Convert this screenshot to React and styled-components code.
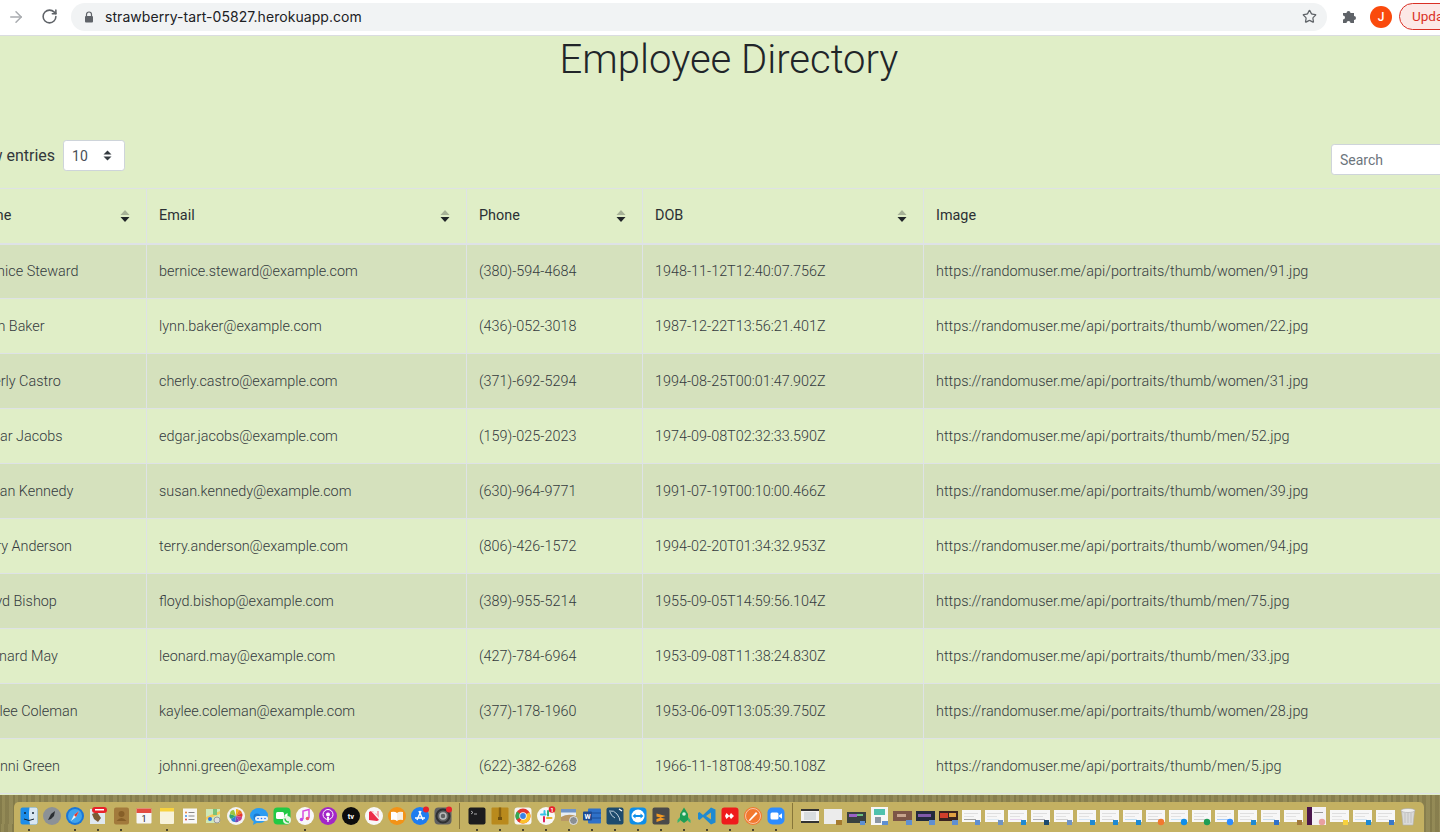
import React from "react";
import styled, { createGlobalStyle } from "styled-components";
import { ArrowRight, RotateCw, Star } from "lucide-react";

const employees = [
  ["Bernice Steward", "bernice.steward@example.com", "(380)-594-4684", "1948-11-12T12:40:07.756Z", "women/91"],
  ["Lynn Baker", "lynn.baker@example.com", "(436)-052-3018", "1987-12-22T13:56:21.401Z", "women/22"],
  ["Cherly Castro", "cherly.castro@example.com", "(371)-692-5294", "1994-08-25T00:01:47.902Z", "women/31"],
  ["Edgar Jacobs", "edgar.jacobs@example.com", "(159)-025-2023", "1974-09-08T02:32:33.590Z", "men/52"],
  ["Susan Kennedy", "susan.kennedy@example.com", "(630)-964-9771", "1991-07-19T00:10:00.466Z", "women/39"],
  ["Terry Anderson", "terry.anderson@example.com", "(806)-426-1572", "1994-02-20T01:34:32.953Z", "women/94"],
  ["Floyd Bishop", "floyd.bishop@example.com", "(389)-955-5214", "1955-09-05T14:59:56.104Z", "men/75"],
  ["Leonard May", "leonard.may@example.com", "(427)-784-6964", "1953-09-08T11:38:24.830Z", "men/33"],
  ["Kaylee Coleman", "kaylee.coleman@example.com", "(377)-178-1960", "1953-06-09T13:05:39.750Z", "women/28"],
  ["Johnni Green", "johnni.green@example.com", "(622)-382-6268", "1966-11-18T08:49:50.108Z", "men/5"],
];

const columns = [
  { label: "Name", width: 186, sortable: true },
  { label: "Email", width: 320, sortable: true },
  { label: "Phone", width: 176, sortable: true },
  { label: "DOB", width: 281, sortable: true },
  { label: "Image", width: 575, sortable: false },
];

const GlobalStyle = createGlobalStyle`
  html, body {
    margin: 0;
    height: 100%;
    overflow: hidden;
    font-family: Roboto, "Liberation Sans", sans-serif;
  }
  * { box-sizing: border-box; }
`;

const Screen = styled.div`
  position: relative;
  width: 1440px;
  height: 832px;
  overflow: hidden;
  background: #e0eec7;
  display: flex;
  flex-direction: column;
`;

/* browser toolbar */
const BrowserBar = styled.header`
  height: 36px;
  flex: none;
  background: #fff;
  border-bottom: 1px solid #dadce0;
  display: flex;
  align-items: center;
  padding: 0 0 2px 7px;
  color: #5f6368;
`;

const NavIcon = styled.span`
  width: 18px;
  height: 18px;
  display: flex;
  margin-left: ${(p) => p.$before || 0}px;
  margin-right: ${(p) => p.$gap || 0}px;
  color: ${(p) => p.$color};
`;

const Omnibox = styled.div`
  width: 1256px;
  height: 28px;
  background: #f1f3f4;
  border-radius: 14px;
  display: flex;
  align-items: center;
  padding: 0 10px 0 13px;
  flex: none;
`;

const Url = styled.span`
  flex: 1;
  margin-left: 11px;
  font-family: Inter, Roboto, sans-serif;
  font-size: 14px;
  letter-spacing: 0.05px;
  color: #202124;
`;

const Avatar = styled.span`
  width: 22px;
  height: 22px;
  border-radius: 50%;
  background: #fa4a0c;
  color: #fff;
  font-size: 12px;
  font-weight: 500;
  display: flex;
  align-items: center;
  justify-content: center;
  margin-left: 12px;
  flex: none;
`;

const UpdateButton = styled.span`
  margin-left: 7px;
  flex: none;
  width: 90px;
  height: 27px;
  border: 1px solid #d93025;
  border-radius: 14px;
  background: #fce8e6;
  color: #d93025;
  font-size: 13.5px;
  line-height: 25px;
  padding-left: 12px;
`;

/* page content, the window is scrolled sideways by 40px */
const Content = styled.main`
  flex: none;
  width: 1538px;
  margin-left: -40px;
  color: #212529;
`;

const Title = styled.h1`
  margin: 0;
  height: 48px;
  text-align: center;
  font-size: 40px;
  line-height: 48px;
  font-weight: 300;
`;

const Toolbar = styled.div`
  height: 104px;
  display: flex;
  justify-content: space-between;
  padding: 56px 0 0 3px;
`;

const LengthLabel = styled.label`
  display: flex;
  align-items: center;
  height: 31px;
  font-size: 16px;
  font-weight: 400;
  color: #33383c;
`;

const FakeSelect = styled.span`
  margin-left: 8px;
  width: 62px;
  height: 31px;
  background: #fff;
  border: 1px solid #ced4da;
  border-radius: 3.2px;
  display: flex;
  align-items: center;
  justify-content: space-between;
  padding: 0 12px 0 8px;
  font-size: 14px;
  font-weight: 400;
  color: #495057;
`;

const SearchInput = styled.input`
  margin: 4px 0 0 0;
  width: 167px;
  height: 31px;
  background: #fff;
  border: 1px solid #ced4da;
  border-radius: 3.2px;
  padding: 0 8px;
  font-family: inherit;
  font-size: 14px;
  font-weight: 400;
  &::placeholder { color: #6c757d; opacity: 1; }
`;

const Table = styled.table`
  width: 1538px;
  table-layout: fixed;
  border-collapse: collapse;
  border-top: 1px solid #dee2e6;
  font-size: 14.4px;
`;

const HeadCell = styled.th`
  width: ${(p) => p.$width}px;
  height: 55px;
  padding: 0 12px;
  text-align: left;
  font-weight: 400;
  color: #2b3034;
  border: 1px solid #dee2e6;
  border-top: 0;
  border-bottom: 2px solid #dee2e6;
`;

const HeadInner = styled.div`
  display: flex;
  align-items: center;
  justify-content: space-between;
  padding-right: 4px;
`;

const Row = styled.tr`
  height: 55px;
  background: ${(p) => (p.$odd ? "#d5e1bd" : "transparent")};
`;

const Cell = styled.td`
  padding: 0 12px;
  font-weight: 300;
  color: #343a3e;
  white-space: nowrap;
  border: 1px solid #dee2e6;
  border-top: 0;
  &:first-child { padding-left: 15px; }
`;

/* dock */
const Dock = styled.footer`
  position: absolute;
  left: 0;
  right: 0;
  bottom: 0;
  height: 37px;
  padding: 7px 16px 0 14px;
  background:
    repeating-linear-gradient(91deg, rgba(70, 65, 25, .16) 0 2px, rgba(175, 165, 100, .14) 2px 5px, rgba(70, 60, 25, .1) 5px 9px, rgba(190, 180, 120, .12) 9px 13px),
    #8f8654;
`;

const Shelf = styled.div`
  height: 30px;
  background: #c4b162;
  border-radius: 5px 5px 0 0;
  display: flex;
  padding-left: 3px;
`;

const Slot = styled.div`
  position: relative;
  width: 23px;
  height: 30px;
  flex: none;
  display: flex;
  justify-content: center;
  padding-top: 4px;
  &::after {
    content: "";
    display: ${(p) => (p.$running ? "block" : "none")};
    position: absolute;
    left: 10.5px;
    bottom: 1px;
    width: 2px;
    height: 2px;
    border-radius: 50%;
    background: #222;
  }
`;

const Separator = styled.div`
  width: 11px;
  flex: none;
  display: flex;
  justify-content: center;
  &::before {
    content: "";
    width: 1px;
    height: 26px;
    margin-top: 1px;
    background: #87763a;
  }
`;

const Glyph = ({ children }) => (
  <svg width="20" height="20" viewBox="0 0 20 20">{children}</svg>
);

const Badge = ({ x = 16 }) => <circle cx={x} cy="3.5" r="3" fill="#e8212b" />;

const round = (fill) => <circle cx="10" cy="10" r="9" fill={fill} />;
const tile = (fill, r = 4) => <rect x="1.5" y="1.5" width="17" height="17" rx={r} fill={fill} />;

const appsLeft = [
  { run: 1, art: <><rect x="1.5" y="1.5" width="17" height="17" rx="2" fill="#1c8ce8" /><path d="M10.5 1.5H16.5a2 2 0 0 1 2 2V16.500a2 2 0 0 1-2 2H11C10 14 9.500 8 10.500 1.500Z" fill="#d8e6f2" /><circle cx="6" cy="7" r="1" fill="#123" /><circle cx="14" cy="7" r="1" fill="#123" /><path d="M5 13q5 3 10 0" stroke="#123" fill="none" /></> },
  { art: <>{round("#8c9196")}<path d="M6 14 9 8l4-3-1 5-3 3z" fill="#2b2f33" /></> },
  { run: 1, art: <>{round("#1976d8")}<circle cx="10" cy="10" r="7" fill="#3fa3ec" /><path d="m14 5-3 6-5 4 3-6z" fill="#f0f0f0" /><path d="m14 5-3 6-2-2z" fill="#e4342b" /></> },
  { run: 1, art: <><rect x="2" y="3" width="15" height="15" fill="#dfe8f0" /><path d="M4 8 9 6l4 6-3 4-4-3z" fill="#7a5a35" /><rect x="4" y="1" width="15" height="6" rx="3" fill="#e8212b" /><rect x="7" y="3" width="9" height="1.500" fill="#fff" /></> },
  { run: 1, art: <><rect x="3" y="1.500" width="15" height="17" rx="2" fill="#a27a3c" /><circle cx="10.500" cy="8" r="3" fill="#865f28" /><path d="M5.500 15q5-6 10 0" fill="#865f28" /></> },
  { art: <><rect x="2.500" y="2.500" width="15" height="15" rx="1" fill="#f6f6f6" /><rect x="2.500" y="2.500" width="15" height="4.500" fill="#e34b40" /><text x="10" y="15.500" fontSize="9" textAnchor="middle" fill="#222" fontFamily="Roboto">1</text></> },
  { run: 1, art: <><rect x="3" y="2" width="14" height="16" rx="1" fill="#f7f3dc" /><rect x="3" y="2" width="14" height="3.500" fill="#f7d23e" /></> },
  { art: <><rect x="3" y="2.500" width="14" height="15" fill="#f8f8f8" /><circle cx="6" cy="6.500" r="1" fill="#e5823a" /><circle cx="6" cy="10" r="1" fill="#3a8ee5" /><circle cx="6" cy="13.500" r="1" fill="#d9453a" /><path d="M8.500 6.500h6M8.500 10h6M8.500 13.500h6" stroke="#888" /></> },
  { art: <><path d="M3 3h14v14H3z" fill="#cfe8b8" /><path d="M3 11 17 5v3L3 14z" fill="#f4c95a" /><path d="M10 3h4v6h-4z" fill="#7ac27a" /><circle cx="7" cy="13" r="2" fill="#2c7be5" /><circle cx="14" cy="14" r="3" fill="#ddd" stroke="#999" /></> },
  { art: <>{round("#f3f3f3")}<path d="M10 10V3a4 4 0 0 1 3 1z" fill="#f6b21b" /><path d="M10 10l3-6a4 4 0 0 1 3 3z" fill="#ee7d22" /><path d="m10 10 6-3a4 4 0 0 1 0 4z" fill="#e4362e" /><path d="m10 10 6 1a4 4 0 0 1-3 4z" fill="#c33a92" /><path d="m10 10 3 5a4 4 0 0 1-4 1z" fill="#7c47b5" /><path d="m10 10-1 6a4 4 0 0 1-4-3z" fill="#2f7fd9" /><path d="M10 10 5 13a4 4 0 0 1-1-5z" fill="#34a56e" /><path d="M10 10 4 8a4 4 0 0 1 4-4z" fill="#9bc53d" /></> },
  { art: <><ellipse cx="10" cy="9.500" rx="9" ry="7.500" fill="#2a9cf2" /><path d="m5 14-1 5 5-3z" fill="#2a9cf2" /><circle cx="8" cy="11" r="3.500" fill="#1c79cf" /><rect x="6" y="10" width="13" height="5" rx="2.500" fill="#e6f1fb" /><circle cx="9" cy="12.500" r=".8" fill="#27f" /><circle cx="12.500" cy="12.500" r=".8" fill="#27f" /><circle cx="16" cy="12.500" r=".8" fill="#27f" /></> },
  { art: <>{tile("#22c945")}<rect x="4" y="6" width="8" height="7" rx="1.500" fill="#fff" /><path d="m12.500 9 3-2v6l-3-2z" fill="#fff" /><circle cx="15" cy="14" r="4" fill="#e8f5e4" /><path d="M13 12.500c0 2 2 4 4 3.500" stroke="#22c945" strokeWidth="1.500" fill="none" /></> },
  { run: 1, art: <>{round("#f8f8f8")}<path d="M8 13V5l6-1.500V12" stroke="#d84be0" strokeWidth="1.500" fill="none" /><circle cx="6.500" cy="13.500" r="1.800" fill="#c04ae8" /><circle cx="12.500" cy="12.500" r="1.800" fill="#f0556f" /></> },
  { art: <>{round("#a326c7")}<circle cx="10" cy="8.500" r="5" fill="none" stroke="#fff" /><circle cx="10" cy="8.500" r="2" fill="#fff" /><path d="M9 11h2l-.4 5h-1.200z" fill="#fff" /></> },
  { art: <>{round("#0d0d0d")}<text x="10" y="13" fontSize="7.500" fontWeight="700" textAnchor="middle" fill="#fff" fontFamily="Roboto">tv</text></> },
  { art: <>{round("#f8f8f8")}<path d="M5 14V6l2-1 8 9-2 1z" fill="#ec2c49" /><path d="M7 5h2l6 7V5h-2v3z" fill="#f6aab4" /></> },
  { art: <>{round("#f29318")}<path d="M4 6q4-1 6 1v8q-2-2-6-1z" fill="#fff" /><path d="M16 6q-4-1-6 1v8q2-2 6-1z" fill="#f7f0e5" /></> },
  { art: <>{round("#1f7df0")}<path d="M7 14 11 5M13 14 9 5M5 12h10" stroke="#fff" strokeWidth="1.500" /><Badge /></> },
  { art: <>{tile("#5f6062")}<circle cx="10" cy="10" r="6.500" fill="none" stroke="#2f3032" strokeWidth="2" /><circle cx="10" cy="10" r="3" fill="none" stroke="#b9babb" strokeWidth="1.500" /><Badge /></> },
];

const appsMiddle = [
  { run: 1, art: <>{tile("#1c1c1e", 2)}<path d="m4 5 2 1.500L4 8M7 8h3" stroke="#ccc" strokeWidth=".8" fill="none" /></> },
  { run: 1, art: <>{tile("#b98a1d", 1)}<rect x="8.800" y="1.500" width="2.400" height="10" fill="#8a6413" /><rect x="8" y="11" width="4" height="3" fill="#6e4f0e" /></> },
  { run: 1, art: <>{tile("#f6f6f6", 3)}<circle cx="10" cy="10" r="7.500" fill="#e4362e" /><path d="M10 10 3.500 13.700A7.500 7.500 0 0 1 4 5.500z" fill="#34a853" /><path d="M10 10 16.500 6.300A7.500 7.500 0 0 1 6.500 16.600z" fill="#fbc02d" /><circle cx="10" cy="10" r="3.700" fill="#fff" /><circle cx="10" cy="10" r="2.900" fill="#3b82e6" /></> },
  { run: 1, art: <>{round("#f8f8f8")}<path d="M5 8.500h4.500M5 8.500" stroke="#35c3e8" strokeWidth="2" strokeLinecap="round" /><path d="M8.500 5v3" stroke="#35c3e8" strokeWidth="2" strokeLinecap="round" /><path d="M12 5v4.500" stroke="#2eb67d" strokeWidth="2" strokeLinecap="round" /><path d="M11 12h4.500" stroke="#ecb22e" strokeWidth="2" strokeLinecap="round" /><path d="M8 11v4.500" stroke="#e01e5a" strokeWidth="2" strokeLinecap="round" /><circle cx="16" cy="3.500" r="3.300" fill="#e8212b" /><text x="16" y="5.500" fontSize="5.500" fontWeight="700" textAnchor="middle" fill="#fff" fontFamily="Roboto">1</text></> },
  { run: 1, art: <><rect x="2" y="3" width="15" height="12" fill="#e8eef4" /><path d="M2 11q7-4 15-1v5H2z" fill="#b89766" /><rect x="2" y="3" width="15" height="3.500" fill="#6f94c8" /><circle cx="14.500" cy="14.500" r="4" fill="#8b8f93" stroke="#e4e4e4" /></> },
  { run: 1, art: <><rect x="6" y="2.500" width="13" height="15" rx="1" fill="#2f71c9" /><path d="M6 7h13M6 12h13" stroke="#1a4e9a" /><rect x="1" y="5.500" width="9" height="9" rx="1" fill="#1c4a92" /><text x="5.500" y="12.500" fontSize="7" fontWeight="700" textAnchor="middle" fill="#fff" fontFamily="Roboto">W</text></> },
  { run: 1, art: <>{tile("#1d4b6e", 2)}<path d="M4 5q5-1 8 3t3 7M5 6q1 4 5 6" stroke="#cfdde8" strokeWidth=".9" fill="none" /><path d="m14 3 3 2" stroke="#fff" strokeWidth="1.300" /></> },
  { run: 1, art: <>{tile("#0e8ee9", 4)}<circle cx="10" cy="10" r="6.500" fill="#fff" /><path d="M4.500 10 7.500 7.500V9h5V7.500l3 2.500-3 2.500V11h-5v1.500z" fill="#0e8ee9" /></> },
  { run: 1, art: <>{tile("#4a4a4a", 2)}<path d="M14.500 4 5.500 7.500v3l9 2.500v-3l-9-2.500zM14.500 10v3L5.500 16v-3z" fill="#f49a23" /></> },
  { run: 1, art: <><path d="M10 1.500 14 8v6l-4 3-4-3V8z" fill="#1e9e55" /><circle cx="10" cy="8" r="1.800" fill="#d6f2e0" /><path d="m6 11-2.500 3v3L6 15zM14 11l2.500 3v3L14 15z" fill="#38b56f" /></> },
  { run: 1, art: <><path d="M14 1.500 18.500 3.500v13L14 18.500 6 11l-3.500 3L1 13V7l1.500-1L6 9zM14 6.500 9 10l5 3.500z" fill="#1f8ad2" /></> },
  { run: 1, art: <>{tile("#ef1c1c", 3)}<path d="m6.500 7 3 3-3 3-1.500-3zM11 7l3 3-3 3-2-3z" fill="#fff" /></> },
  { run: 1, art: <>{round("#f2782f")}<circle cx="10" cy="10" r="7.500" fill="none" stroke="#f7d8c3" strokeWidth=".8" /><path d="M5.500 14.500 13 6l1.500 1.500L7 15z" fill="#fff" /></> },
  { run: 1, art: <>{tile("#2d8cff", 5)}<rect x="4.500" y="6.500" width="8" height="7" rx="1.500" fill="#fff" /><path d="m13 9.500 3-2.300v5.600l-3-2.300z" fill="#fff" /></> },
];

const minis = [
  <><rect x="1" y="3" width="18" height="13" fill="#f4f4f4" /><rect x="1" y="3" width="18" height="2" fill="#333" /><rect x="4" y="6" width="12" height="8" fill="#d8dde0" /><rect x="1" y="15" width="18" height="2" fill="#333" /></>,
  <><rect x="1" y="3" width="18" height="15" fill="#ececec" /><rect x="13" y="14" width="6" height="5" fill="#a57b30" /></>,
  <><rect x="1" y="6" width="19" height="11" fill="#39413f" /><rect x="3" y="8" width="8" height="3" fill="#9a62c4" /><rect x="11" y="8" width="6" height="2" fill="#6cc07f" /><rect x="14" y="15" width="5" height="4" fill="#5f8fd0" /></>,
  <><rect x="2" y="1" width="17" height="18" fill="#f6f6f6" /><rect x="5" y="3" width="11" height="6" fill="#4fc1ad" /><rect x="6" y="11" width="6" height="6" fill="#8c96a3" /><rect x="13" y="15" width="6" height="4" fill="#5f8fd0" /></>,
  <><rect x="1" y="5" width="19" height="10" fill="#7c5647" /><rect x="5" y="8" width="9" height="3" fill="#c7a58e" /><rect x="14" y="14" width="6" height="5" fill="#5f8fd0" /></>,
  <><rect x="1" y="5" width="19" height="10" fill="#232a3c" /><rect x="3" y="8" width="13" height="3" fill="#7f5aa8" /><rect x="14" y="14" width="6" height="5" fill="#5f8fd0" /></>,
  <><rect x="1" y="5" width="19" height="10" fill="#3b2320" /><rect x="2" y="7" width="8" height="5" fill="#d13f2b" /><rect x="11" y="7" width="7" height="4" fill="#e0a042" /><rect x="14" y="14" width="6" height="5" fill="#5f8fd0" /></>,
];

const page = (accent, mark) => (
  <>
    <rect x="1" y="4" width="19" height="12" fill="#f7f7f7" />
    <rect x="3" y="7" width="14" height="1" fill="#dedede" />
    <rect x="3" y="10" width="10" height="1" fill="#e2e2e2" />
    <rect x="3" y="13" width="12" height="1" fill={accent} opacity=".4" />
    {mark}
  </>
);

const box = (c) => <rect x="14" y="14" width="5" height="5" fill={c} />;
const dot = (c) => <circle cx="16" cy="16" r="3.200" fill={c} />;

const pageMinis = [
  page("#222", box("#5f8fd0")),
  page("#bcd8ee", box("#6f93c4")),
  page("#c79ad8", box("#1f8ad2")),
  page("#445", box("#1d4b6e")),
  page("#999", box("#6f93c4")),
  page("#9fc8ea", box("#1f8ad2")),
  page("#aaa", box("#1f8ad2")),
  page("#6cb6e8", box("#1f8ad2")),
  page("#888", dot("#f2782f")),
  page("#7fc2ea", dot("#0e8ee9")),
  page("#999", dot("#1e9e55")),
  page("#2d8cff", dot("#2d8cff")),
  page("#bbb", box("#1f8ad2")),
  page("#7fb1d8", box("#2f71c9")),
  page("#ddd", box("#a27a3c")),
  <><rect x="1" y="1" width="19" height="18" fill="#f4f2f4" /><rect x="1" y="1" width="5" height="18" fill="#4a154b" /><rect x="8" y="6" width="9" height="1" fill="#999" /><circle cx="16" cy="16" r="3.200" fill="#e8a0a0" /></>,
  page("#ccc", box("#f7d23e")),
  page("#9fc8ea", box("#1f8ad2")),
  page("#ccc", box("#3a78c8")),
];

const Trash = () => (
  <Glyph>
    <path d="M3.500 5h13l-1.500 14H5z" fill="#dadada" stroke="#b2b2b2" strokeWidth=".6" />
    <ellipse cx="10" cy="4.500" rx="7" ry="2" fill="#efefef" stroke="#a8a8a8" strokeWidth=".6" />
    <path d="M7 7v10M10 7v10M13 7v10" stroke="#aeaeae" strokeWidth=".6" />
  </Glyph>
);

const SortArrows = () => (
  <svg width="10" height="14" viewBox="0 0 10 14">
    <path d="M5 1 9.500 6H.5z" fill="#212529" opacity=".3" />
    <path d="M5 13 .5 8h9z" fill="#212529" />
  </svg>
);

const SelectArrows = () => (
  <svg width="9" height="11" viewBox="0 0 9 11">
    <path d="M4.500 .5 8.500 4.500H.5zM4.500 10.500.5 6.500h8z" fill="#343a40" />
  </svg>
);

const LockIcon = () => (
  <svg width="10" height="12" viewBox="0 0 10 12">
    <path d="M2.500 5V3.500a2.500 2.500 0 0 1 5 0V5" fill="none" stroke="#5f6368" strokeWidth="1.200" />
    <rect x="1" y="5" width="8" height="6.500" rx="1" fill="#5f6368" />
  </svg>
);

const PuzzleIcon = () => (
  <svg width="16" height="16" viewBox="0 0 16 16">
    <path d="M1 5h3.500a2 2 0 1 1 4 0H12v3a2 2 0 1 1 0 4v3H8.500a2 2 0 1 0-4 0H1v-3.500a2 2 0 1 0 0-4z" fill="#5f6368" />
  </svg>
);

export default function App() {
  return (
    <Screen>
      <GlobalStyle />
      <BrowserBar>
        <NavIcon $gap={16} $color="#a9acb0"><ArrowRight size={18} strokeWidth={2} /></NavIcon>
        <NavIcon $gap={13} $color="#5f6368"><RotateCw size={17} strokeWidth={2.2} /></NavIcon>
        <Omnibox>
          <LockIcon />
          <Url>strawberry-tart-05827.herokuapp.com</Url>
          <Star size={15} strokeWidth={2} color="#5f6368" />
        </Omnibox>
        <NavIcon $before={15}><PuzzleIcon /></NavIcon>
        <Avatar>J</Avatar>
        <UpdateButton>Update</UpdateButton>
      </BrowserBar>

      <Content>
        <Title>Employee Directory</Title>
        <Toolbar>
          <LengthLabel>
            Show entries
            <FakeSelect>10<SelectArrows /></FakeSelect>
          </LengthLabel>
          <SearchInput placeholder="Search" />
        </Toolbar>
        <Table>
          <thead>
            <tr>
              {columns.map((c) => (
                <HeadCell key={c.label} $width={c.width}>
                  <HeadInner>
                    {c.label}
                    {c.sortable && <SortArrows />}
                  </HeadInner>
                </HeadCell>
              ))}
            </tr>
          </thead>
          <tbody>
            {employees.map((e, i) => (
              <Row key={e[1]} $odd={i % 2 === 0}>
                <Cell>{e[0]}</Cell>
                <Cell>{e[1]}</Cell>
                <Cell>{e[2]}</Cell>
                <Cell>{e[3]}</Cell>
                <Cell>{`https://randomuser.me/api/portraits/thumb/${e[4]}.jpg`}</Cell>
              </Row>
            ))}
          </tbody>
        </Table>
      </Content>

      <Dock>
        <Shelf>
          {appsLeft.map((a, i) => (
            <Slot key={i} $running={a.run}><Glyph>{a.art}</Glyph></Slot>
          ))}
          <Separator />
          {appsMiddle.map((a, i) => (
            <Slot key={i} $running={a.run}><Glyph>{a.art}</Glyph></Slot>
          ))}
          <Separator />
          {minis.map((art, i) => (
            <Slot key={i}><Glyph>{art}</Glyph></Slot>
          ))}
          {pageMinis.map((art, i) => (
            <Slot key={i}><Glyph>{art}</Glyph></Slot>
          ))}
          <Slot><Trash /></Slot>
        </Shelf>
      </Dock>
    </Screen>
  );
}
